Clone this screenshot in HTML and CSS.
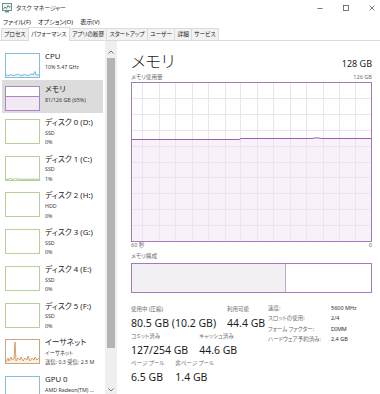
FILE: index.html
```html
<!DOCTYPE html>
<html lang="ja">
<head>
<meta charset="utf-8">
<title>タスク マネージャー</title>
<link rel="stylesheet" href="styles.css">
</head>
<body>
<div class="window">
  <div class="titlebar">
    <svg class="app-icon" width="10" height="10" viewBox="0 0 10 10">
      <rect x="0.5" y="0.5" width="9" height="7" fill="#eef3f6" stroke="#6f8da0"/>
      <polyline points="1.5,6 3,4 4.5,5.5 6,2.5 7.5,4.5 8.5,3" fill="none" stroke="#3c9a3c" stroke-width="0.9"/>
      <rect x="3" y="8" width="4" height="1.5" fill="#6f8da0"/>
    </svg>
    <span class="app-title">タスク マネージャー</span>
    <div class="controls">
      <svg width="6" height="6" viewBox="0 0 6 6"><line x1="0.5" y1="3.5" x2="5.5" y2="3.5" stroke="#555" stroke-width="0.8"/></svg>
      <svg width="6" height="6" viewBox="0 0 6 6"><rect x="0.5" y="0.5" width="5" height="5" fill="none" stroke="#555" stroke-width="0.8"/></svg>
      <svg width="6" height="6" viewBox="0 0 6 6"><path d="M0.5 0.5L5.5 5.5M5.5 0.5L0.5 5.5" stroke="#555" stroke-width="0.8"/></svg>
    </div>
  </div>
  <div class="menubar">
    <span>ファイル(F)</span><span>オプション(O)</span><span>表示(V)</span>
  </div>
  <div class="tabs">
    <div class="tab">プロセス</div>
    <div class="tab active">パフォーマンス</div>
    <div class="tab">アプリの履歴</div>
    <div class="tab">スタートアップ</div>
    <div class="tab">ユーザー</div>
    <div class="tab">詳細</div>
    <div class="tab">サービス</div>
  </div>
  <div class="main">
    <div class="sidebar">
      <div class="list">
        <div class="item">
          <div class="thumb thumb-cpu">
            <svg width="33" height="23" viewBox="0 0 33 23"><polygon points="0,21 3,21.5 5,20.5 7,21.5 10,21 12,20 14,21.5 17,21 19,20.5 21,21.5 24,21 26,19.5 27,21 29,17.5 30,21 33,21 33,23 0,23" fill="#eaf4fa"/><polyline points="0,21 3,21.5 5,20.5 7,21.5 10,21 12,20 14,21.5 17,21 19,20.5 21,21.5 24,21 26,19.5 27,21 29,17.5 30,21 33,21" fill="none" stroke="#5aa6d3" stroke-width="0.8"/></svg>
          </div>
          <div class="info"><div class="name">CPU</div><div class="sub">10% 5.47 GHz</div></div>
        </div>
        <div class="item selected">
          <div class="thumb thumb-mem">
            <svg width="33" height="23" viewBox="0 0 33 23"><rect x="0" y="9.5" width="33" height="14" fill="#f1eaf4"/><line x1="0" y1="9.5" x2="33" y2="9.5" stroke="#a775bb" stroke-width="0.9"/></svg>
          </div>
          <div class="info"><div class="name">メモリ</div><div class="sub">81/126 GB (65%)</div></div>
        </div>
        <div class="item">
          <div class="thumb thumb-disk"></div>
          <div class="info"><div class="name">ディスク 0 (D:)</div><div class="sub">SSD</div><div class="sub">0%</div></div>
        </div>
        <div class="item">
          <div class="thumb thumb-disk">
            <svg width="33" height="23" viewBox="0 0 33 23"><polyline points="0,22.3 3,22.3 4,21 5,22.3 8,22.3 9,21.3 10,22.3 12,21.6 13,22.3 33,22.3" fill="none" stroke="#8fbf66" stroke-width="0.8"/></svg>
          </div>
          <div class="info"><div class="name">ディスク 1 (C:)</div><div class="sub">SSD</div><div class="sub">1%</div></div>
        </div>
        <div class="item">
          <div class="thumb thumb-disk"></div>
          <div class="info"><div class="name">ディスク 2 (H:)</div><div class="sub">HDD</div><div class="sub">0%</div></div>
        </div>
        <div class="item">
          <div class="thumb thumb-disk"></div>
          <div class="info"><div class="name">ディスク 3 (G:)</div><div class="sub">SSD</div><div class="sub">0%</div></div>
        </div>
        <div class="item">
          <div class="thumb thumb-disk"></div>
          <div class="info"><div class="name">ディスク 4 (E:)</div><div class="sub">SSD</div><div class="sub">0%</div></div>
        </div>
        <div class="item">
          <div class="thumb thumb-disk"></div>
          <div class="info"><div class="name">ディスク 5 (F:)</div><div class="sub">SSD</div><div class="sub">0%</div></div>
        </div>
        <div class="item">
          <div class="thumb thumb-net">
            <svg width="33" height="23" viewBox="0 0 33 23"><polygon points="0,22 2,18 3,21 5,17 6,20 8,19 9,2 10,21 12,18 14,20 15,17 17,21 19,18 21,20 22,16 24,21 26,18 28,20 29,17 31,20 33,18 33,23 0,23" fill="#fbefe2"/><polyline points="0,22 2,18 3,21 5,17 6,20 8,19 9,2 10,21 12,18 14,20 15,17 17,21 19,18 21,20 22,16 24,21 26,18 28,20 29,17 31,20 33,18" fill="none" stroke="#c98a4c" stroke-width="0.8"/></svg>
          </div>
          <div class="info"><div class="name">イーサネット</div><div class="sub">イーサネット</div><div class="sub">送信: 0.3 受信: 2.5 M</div></div>
        </div>
        <div class="item">
          <div class="thumb thumb-cpu"></div>
          <div class="info"><div class="name">GPU 0</div><div class="sub">AMD Radeon(TM) ...</div></div>
        </div>
      </div>
      <div class="scrollbar">
        <svg class="arrow" width="6" height="4" viewBox="0 0 6 4"><polyline points="0.5,3.5 3,1 5.5,3.5" fill="none" stroke="#666" stroke-width="0.9"/></svg>
        <div class="thumb-bar"></div>
        <svg class="arrow arrow-down" width="6" height="4" viewBox="0 0 6 4"><polyline points="0.5,0.5 3,3 5.5,0.5" fill="none" stroke="#666" stroke-width="0.9"/></svg>
      </div>
    </div>
    <div class="content">
      <div class="header">
        <div class="big-title">メモリ</div>
        <div class="total">128 GB</div>
      </div>
      <div class="caption-row caption-top"><span>メモリ使用量</span><span>126 GB</span></div>
      <svg class="graph" width="241" height="160" viewBox="0 0 241 160">
        <polygon points="1,57.5 108,57.5 110,56.5 180,56.5 186,55.8 191,56.5 240,56.5 240,159 1,159" fill="#f7f2f9"/>
        <path d="M1 16.5H240M1 32.5H240M1 48.5H240M1 64.5H240M1 80.5H240M1 95.5H240M1 111.5H240M1 127.5H240M1 143.5H240M11.5 1V159M28.5 1V159M44.5 1V159M61.5 1V159M77.5 1V159M94.5 1V159M109.5 1V159M126.5 1V159M142.5 1V159M159.5 1V159M175.5 1V159M192.5 1V159M208.5 1V159M224.5 1V159" stroke="#ede3f0" stroke-width="1" fill="none"/>
        <polyline points="1,57.5 108,57.5 110,56.5 180,56.5 186,55.8 191,56.5 240,56.5" fill="none" stroke="#9c5cb2" stroke-width="1"/>
        <rect x="0.5" y="0.5" width="240" height="159" fill="none" stroke="#a57ab8" stroke-width="1"/>
      </svg>
      <div class="caption-row axis"><span>60 秒</span><span>0</span></div>
      <div class="caption-row compo-label"><span>メモリ構成</span></div>
      <div class="compo">
        <div class="compo-used" style="width:64.3%"></div>
      </div>
      <div class="stats">
        <div class="stats-left">
          <div class="stat-row">
            <div class="stat"><div class="label">使用中 (圧縮)</div><div class="value">80.5 GB (10.2 GB)</div></div>
            <div class="stat"><div class="label">利用可能</div><div class="value">44.4 GB</div></div>
          </div>
          <div class="stat-row">
            <div class="stat"><div class="label">コミット済み</div><div class="value">127/254 GB</div></div>
            <div class="stat"><div class="label">キャッシュ済み</div><div class="value">44.6 GB</div></div>
          </div>
          <div class="stat-row">
            <div class="stat"><div class="label">ページ プール</div><div class="value">6.5 GB</div></div>
            <div class="stat"><div class="label">非ページ プール</div><div class="value">1.4 GB</div></div>
          </div>
        </div>
        <div class="details">
          <span class="dl">速度:</span><span class="dv">5600 MHz</span>
          <span class="dl">スロットの使用:</span><span class="dv">2/4</span>
          <span class="dl">フォーム ファクター:</span><span class="dv">DIMM</span>
          <span class="dl">ハードウェア予約済み:</span><span class="dv">2.4 GB</span>
        </div>
      </div>
    </div>
  </div>
</div>
</body>
</html>
```
FILE: styles.css
```css
* { box-sizing: border-box; }
html, body { margin: 0; padding: 0; }
body {
  width: 380px;
  height: 394px;
  overflow: hidden;
  background: #fff;
  color: #1c1c1c;
  font-family: "Noto Sans", "Noto Sans CJK JP", sans-serif;
  font-feature-settings: "palt";
}
.window { width: 380px; height: 394px; display: flex; flex-direction: column; overflow: hidden; }

.titlebar { height: 16px; display: flex; align-items: center; padding-left: 2px; flex: none; }
.app-icon { display: block; }
.app-title { margin-left: 4px; font-size: 5.9px; line-height: 16px; color: #333; }
.controls { margin-left: auto; display: flex; gap: 20px; padding-right: 5px; align-items: center; }
.controls svg { display: block; }

.menubar { height: 11px; display: flex; gap: 7px; padding-left: 3px; font-size: 6.1px; line-height: 11px; color: #222; flex: none; }

.tabs { height: 14px; display: flex; align-items: flex-end; border-bottom: 1px solid #dadada; padding-left: 1px; flex: none; }
.tab { height: 12px; padding: 0 2.2px; font-size: 5.7px; line-height: 11px; color: #222; background: #f2f2f2; border: 1px solid #dcdcdc; border-bottom: none; margin-right: -1px; }
.tab.active { background: #fff; height: 14px; margin-bottom: -1px; line-height: 13px; padding: 0 2.5px; position: relative; }

.main { flex: 1; display: flex; min-height: 0; }

.sidebar { width: 117px; flex: none; display: flex; }
.list { width: 105px; padding: 6px 2px 0 2px; overflow: hidden; }
.item { display: flex; align-items: flex-start; padding: 4px 2px 2px 3px; }
.item.selected { background: #dcdcdc; }
.thumb { width: 35px; height: 25px; flex: none; margin-top: 2px; border: 1px solid #ccc; background: #fff; overflow: hidden; }
.thumb svg { display: block; }
.thumb-cpu { border-color: #86bddc; }
.thumb-mem { border-color: #ad86bf; }
.thumb-disk { border-color: #b4d198; }
.thumb-net { border-color: #cda57c; }
.info { margin-left: 5px; min-width: 0; flex: 1; }
.name { font-size: 7.8px; line-height: 11.7px; color: #1c1c1c; white-space: nowrap; }
.sub { font-size: 5.3px; line-height: 9.5px; color: #3a3a3a; white-space: nowrap; }

.scrollbar { width: 12px; background: #efefef; display: flex; flex-direction: column; align-items: center; padding-top: 9px; }
.arrow { display: block; flex: none; }
.thumb-bar { width: 8px; height: 290px; background: #b4b4b4; margin-top: 4px; flex: none; }
.arrow-down { margin-top: 40px; }

.content { flex: 1; padding: 0 8px 0 14px; min-width: 0; }
.header { display: flex; align-items: flex-start; justify-content: space-between; margin-top: 12px; height: 18px; }
.big-title { font-size: 16.5px; line-height: 18px; font-weight: 300; color: #1c1c1c; }
.total { font-size: 9px; line-height: 12px; margin-top: 5px; color: #1c1c1c; }
.caption-row { display: flex; justify-content: space-between; font-size: 5.6px; line-height: 6px; color: #6e6e6e; }
.caption-top { margin-top: 3px; margin-bottom: 2px; }
.graph { display: block; }
.compo-label { margin-top: 5px; margin-bottom: 4px; }
.compo { height: 30px; border: 1px solid #a57ab8; display: flex; }
.compo-used { background: #f2f0f3; border-right: 1px solid #c8a6d4; }

.stats { display: flex; align-items: flex-start; margin-top: 12px; }
.stats-left { width: 137px; flex: none; }
.stat-row { display: flex; gap: 11px; }
.stat-row + .stat-row { margin-top: 2px; }
.label { font-size: 5.5px; line-height: 8px; color: #6e6e6e; white-space: nowrap; }
.value { font-size: 10.5px; line-height: 14px; margin-top: 3px; color: #1c1c1c; white-space: nowrap; }
.details { display: grid; grid-template-columns: 63px auto; margin-top: -2px; font-size: 5.5px; line-height: 10.3px; }
.dl { color: #6e6e6e; white-space: nowrap; }
.dv { color: #2a2a2a; white-space: nowrap; }
```
